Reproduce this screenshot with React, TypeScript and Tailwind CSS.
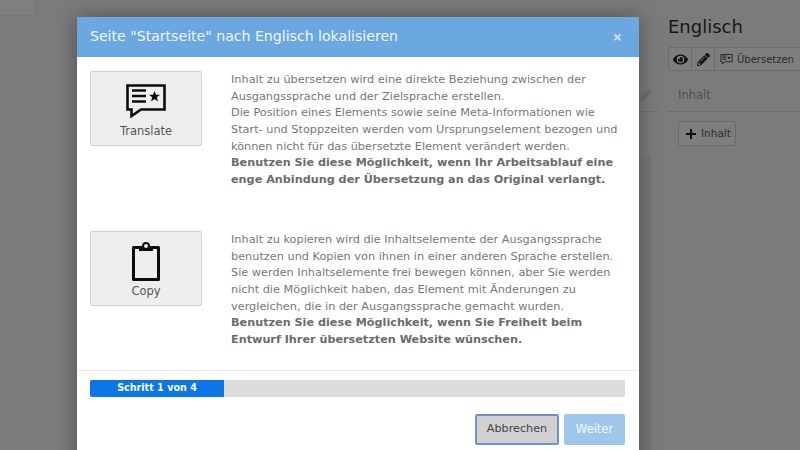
import React from 'react';
import { FaEye, FaPencilAlt } from 'react-icons/fa';

const verdana = 'font-["DejaVu_Sans",sans-serif]';

function TranslateIcon({ className }: { className?: string }) {
  return (
    <svg viewBox="0 0 40 36" className={className} fill="none">
      <path d="M1.5 1.5H38.5V25.5H15L5.5 32V25.5H1.5Z" stroke="currentColor" strokeWidth="2.6" strokeLinejoin="miter" />
      <path d="M6 6.5H20M6 12H20M6 17.5H20" stroke="currentColor" strokeWidth="2.4" />
      <path d="M28.5 7L30 10.8H34L30.8 13.3L32 17.4L28.5 15L25 17.4L26.2 13.3L23 10.8H27Z" fill="currentColor" />
    </svg>
  );
}

function ClipboardIcon({ className }: { className?: string }) {
  return (
    <svg viewBox="0 0 28 40" className={className} fill="none">
      <path d="M1.5 5.5H26.5V37.5H1.5Z" stroke="currentColor" strokeWidth="3" strokeLinejoin="round" />
      <path d="M7 5H21V9H7Z" fill="currentColor" />
      <circle cx="14" cy="4" r="3" fill="#eeeeee" stroke="currentColor" strokeWidth="2" />
    </svg>
  );
}

function OptionBlock({
  icon,
  label,
  lines,
  bold,
}: {
  icon: React.ReactNode;
  label: string;
  lines: string[];
  bold: string[];
}) {
  return (
    <div className="flex h-[120px]">
      <div className="flex h-[75px] w-[112px] shrink-0 flex-col items-center rounded-[2px] border border-[#cfcfcf] bg-[#eeeeee] pt-[11px]">
        <div className="flex h-[37px] items-center justify-center text-[#0c0c0c]">{icon}</div>
        <span className={`mt-[3px] text-[11.5px] leading-[16px] text-[#555555] ${verdana}`}>{label}</span>
      </div>
      <div className={`ml-[29px] whitespace-nowrap pt-[1px] text-[11.3px] leading-[16.67px] text-[#777777] ${verdana}`}>
        {lines.map((line) => (
          <div key={line}>{line}</div>
        ))}
        {bold.map((line) => (
          <div key={line} className="text-[11.23px] font-bold text-[#6b6b6b]">
            {line}
          </div>
        ))}
      </div>
    </div>
  );
}

export default function App() {
  return (
    <div className="relative flex h-[450px] w-[800px] overflow-hidden bg-[#7b7b7b]">
      {/* Seite hinter dem Dialog */}
      <div className="h-[16px] w-[36px] border-b border-r border-[#767676] bg-[#808080]" />
      <div className="ml-auto flex w-[161px]">
        <div className="mt-[90px] w-[19px]">
          <div className="flex h-[21px] pl-[1px] text-[#6b6b6b]">
            <FaPencilAlt className="h-[11px] w-[11px]" />
          </div>
          <div className="h-px bg-[#6e6e6e]" />
          <div className="mt-[44px] h-[295px] w-[11px] border-r border-[#6e6e6e] bg-[#777777]" />
        </div>
        <div className="ml-[10px] w-[132px] pt-[17px]">
          <h2 className={`text-[18px] leading-[20px] text-[#171717] ${verdana}`}>Englisch</h2>
          <div className="mt-[10px] flex h-[24px] w-[140px] rounded-l-[2px] border border-[#6c6c6c] bg-[#7e7e7e] text-[#131313]">
            <div className="flex w-[23px] items-center justify-center border-r border-[#6c6c6c]">
              <FaEye className="h-[15px] w-[15px]" />
            </div>
            <div className="flex w-[23px] items-center justify-center border-r border-[#6c6c6c]">
              <FaPencilAlt className="h-[13px] w-[13px]" />
            </div>
            <div className="flex items-center pl-[5px]">
              <TranslateIcon className="h-[11px] w-[13px]" />
              <span className={`ml-[4px] text-[10px] text-[#2c2c2c] ${verdana}`}>Übersetzen</span>
            </div>
          </div>
          <div className={`mt-[17px] h-[24px] border-b border-[#6e6e6e] pl-[10px] text-[11.5px] leading-[14px] text-[#505050] ${verdana}`}>
            Inhalt
          </div>
          <div className="mt-[9px] ml-[10px] flex h-[25px] w-[58px] items-center rounded-[2px] border border-[#6a6a6a] bg-[#7e7e7e] pl-[7px]">
            <span className="relative h-[10px] w-[10px] shrink-0">
              <span className="absolute left-0 top-[4px] h-[2px] w-[10px] bg-[#111111]" />
              <span className="absolute left-[4px] top-0 h-[10px] w-[2px] bg-[#111111]" />
            </span>
            <span className={`ml-[5px] text-[10.5px] text-[#2c2c2c] ${verdana}`}>Inhalt</span>
          </div>
        </div>
      </div>

      {/* Dialog */}
      <div className="absolute left-[77px] top-[17px] h-[460px] w-[562px] bg-white shadow-[0_0_20px_rgba(0,0,0,0.35)]">
        <div className="flex h-[39.5px] items-center justify-between bg-[#6ba7e0] pl-[13px] pr-[17px]">
          <span className={`text-[14.1px] text-[#f2f7fc] ${verdana}`}>Seite "Startseite" nach Englisch lokalisieren</span>
          <span className="text-[16px] font-bold leading-none text-[#cfe2f5]">×</span>
        </div>
        <div className="flex flex-col gap-[40px] px-[13px] pb-[19px] pt-[14.5px]">
          <OptionBlock
            icon={<TranslateIcon className="h-[36px] w-[40px]" />}
            label="Translate"
            lines={[
              'Inhalt zu übersetzen wird eine direkte Beziehung zwischen der',
              'Ausgangssprache und der Zielsprache erstellen.',
              'Die Position eines Elements sowie seine Meta-Informationen wie',
              'Start- und Stoppzeiten werden vom Ursprungselement bezogen und',
              'können nicht für das übersetzte Element verändert werden.',
            ]}
            bold={[
              'Benutzen Sie diese Möglichkeit, wenn Ihr Arbeitsablauf eine',
              'enge Anbindung der Übersetzung an das Original verlangt.',
            ]}
          />
          <OptionBlock
            icon={<ClipboardIcon className="h-[40px] w-[28px]" />}
            label="Copy"
            lines={[
              'Inhalt zu kopieren wird die Inhaltselemente der Ausgangssprache',
              'benutzen und Kopien von ihnen in einer anderen Sprache erstellen.',
              'Sie werden Inhaltselemente frei bewegen können, aber Sie werden',
              'nicht die Möglichkeit haben, das Element mit Änderungen zu',
              'vergleichen, die in der Ausgangssprache gemacht wurden.',
            ]}
            bold={[
              'Benutzen Sie diese Möglichkeit, wenn Sie Freiheit beim',
              'Entwurf Ihrer übersetzten Website wünschen.',
            ]}
          />
        </div>
        <div className="border-t border-[#e8e8e8] px-[13px] pt-[9px]">
          <div className="h-[17px] w-[535px] overflow-hidden rounded-[2px] bg-[#dcdcdc]">
            <div className={`flex h-full w-[134px] items-center justify-center bg-[#0b76e8] text-[9.6px] font-bold text-white ${verdana}`}>
              Schritt 1 von 4
            </div>
          </div>
          <div className="mt-[17px] flex w-[535px] justify-end gap-[5px]">
            <button className={`h-[31px] w-[84px] rounded-[2px] border-2 border-[#6f93c8] bg-[#d0d0d0] text-[11.2px] text-[#444444] ${verdana}`}>
              Abbrechen
            </button>
            <button className={`h-[31px] w-[61px] rounded-[2px] bg-[#9fc7ec] text-[11.5px] text-[#f4f9fd] ${verdana}`}>
              Weiter
            </button>
          </div>
        </div>
      </div>
    </div>
  );
}
